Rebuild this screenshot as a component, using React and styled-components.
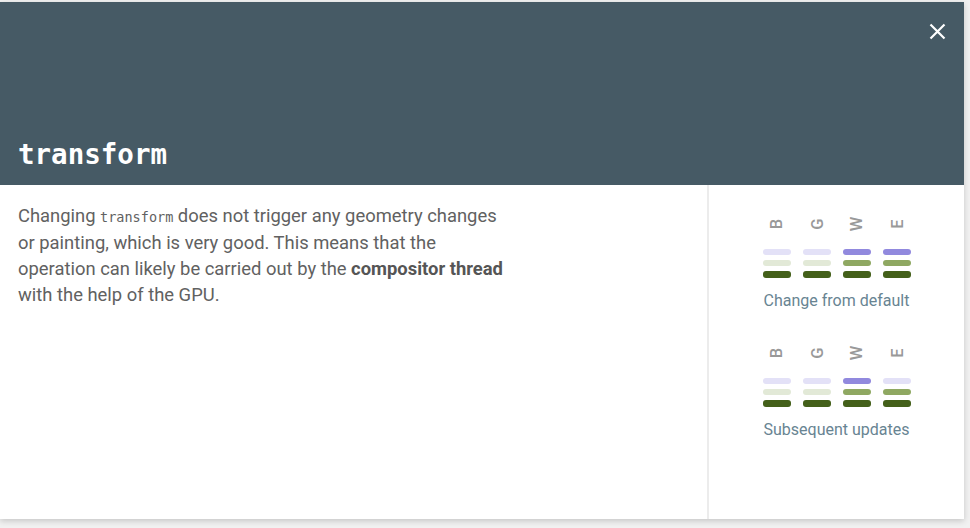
import React from "react";
import styled, { createGlobalStyle } from "styled-components";

const GlobalStyle = createGlobalStyle`
  html, body {
    margin: 0;
    padding: 0;
    background: #f1f1f1;
  }
  body {
    font-family: Roboto, "Liberation Sans", sans-serif;
  }
`;

const Page = styled.div`
  width: 970px;
  height: 528px;
  padding-top: 2px;
  box-sizing: border-box;
`;

const Card = styled.div`
  width: 964px;
  height: 517px;
  background: #fff;
  display: flex;
  flex-direction: column;
  box-shadow: 0 2px 6px rgba(0, 0, 0, 0.18);
`;

const Header = styled.header`
  position: relative;
  height: 183px;
  flex: none;
  background: #465a65;
  display: flex;
  flex-direction: column;
  justify-content: flex-end;
  padding: 0 18px 14px;
  box-sizing: border-box;
`;

const Title = styled.h1`
  margin: 0;
  color: #fff;
  font-family: "DejaVu Sans Mono", "Liberation Mono", monospace;
  font-weight: bold;
  font-size: 27.5px;
  line-height: 34px;
`;

const CloseButton = styled.button`
  position: absolute;
  top: 19px;
  right: 17px;
  width: 20px;
  height: 20px;
  padding: 0;
  border: none;
  background: transparent;
  cursor: pointer;
  display: flex;
  align-items: center;
  justify-content: center;
`;

const Body = styled.div`
  flex: 1;
  display: flex;
`;

const Main = styled.div`
  flex: 1;
  padding: 18px 18px;
`;

const Text = styled.p`
  margin: 0;
  max-width: 490px;
  color: #616161;
  font-size: 18.4px;
  line-height: 26px;

  code {
    font-family: "DejaVu Sans Mono", "Liberation Mono", monospace;
    font-size: 13.5px;
  }

  strong {
    color: #555;
    font-weight: bold;
  }
`;

const Sidebar = styled.aside`
  width: 255px;
  flex: none;
  border-left: 2px solid #ececec;
  display: flex;
  flex-direction: column;
  align-items: center;
  padding-top: 29px;
  gap: 32px;
`;

const Group = styled.div`
  display: flex;
  flex-direction: column;
  align-items: center;
`;

const Columns = styled.div`
  display: flex;
  gap: 12px;
`;

const Column = styled.div`
  width: 28px;
  display: flex;
  flex-direction: column;
  align-items: center;
`;

const Letter = styled.span`
  height: 20px;
  margin-bottom: 15px;
  display: flex;
  align-items: center;
  justify-content: center;
  color: #999;
  font-size: 16.5px;
  font-weight: 500;
  transform: rotate(-90deg);
`;

const Bar = styled.div`
  width: 28px;
  height: 6px;
  border-radius: 3px;
  margin-bottom: 5px;
  background: ${(p) => p.color};
  &:last-child {
    margin-bottom: 0;
    height: 7px;
  }
`;

const Caption = styled.div`
  margin-top: 13px;
  color: #688492;
  font-size: 16px;
  line-height: 20px;
`;

const COLORS = {
  layout: ["#e3e1f7", "#9189de"],
  paint: ["#e2e9d7", "#8fa862"],
  composite: ["#44601a", "#44601a"],
};

const groups = [
  {
    caption: "Change from default",
    cols: [
      ["B", 0, 0],
      ["G", 0, 0],
      ["W", 1, 1],
      ["E", 1, 1],
    ],
  },
  {
    caption: "Subsequent updates",
    cols: [
      ["B", 0, 0],
      ["G", 0, 0],
      ["W", 1, 1],
      ["E", 0, 1],
    ],
  },
];

const App = () => (
  <>
    <GlobalStyle />
    <Page>
      <Card>
        <Header>
          <Title>transform</Title>
          <CloseButton aria-label="Close">
            <svg width="17" height="17" viewBox="0 0 17 17">
              <path d="M1.5 1.5 L15.5 15.5 M15.5 1.5 L1.5 15.5" stroke="#fff" strokeWidth="2.2" />
            </svg>
          </CloseButton>
        </Header>
        <Body>
          <Main>
            <Text>
              Changing <code>transform</code> does not trigger any geometry changes or
              painting, which is very good. This means that the operation can likely be
              carried out by the <strong>compositor thread</strong> with the help of the GPU.
            </Text>
          </Main>
          <Sidebar>
            {groups.map((g) => (
              <Group key={g.caption}>
                <Columns>
                  {g.cols.map(([l, a, b]) => (
                    <Column key={l}>
                      <Letter>{l}</Letter>
                      <Bar color={COLORS.layout[a]} />
                      <Bar color={COLORS.paint[b]} />
                      <Bar color={COLORS.composite[0]} />
                    </Column>
                  ))}
                </Columns>
                <Caption>{g.caption}</Caption>
              </Group>
            ))}
          </Sidebar>
        </Body>
      </Card>
    </Page>
  </>
);

export default App;
